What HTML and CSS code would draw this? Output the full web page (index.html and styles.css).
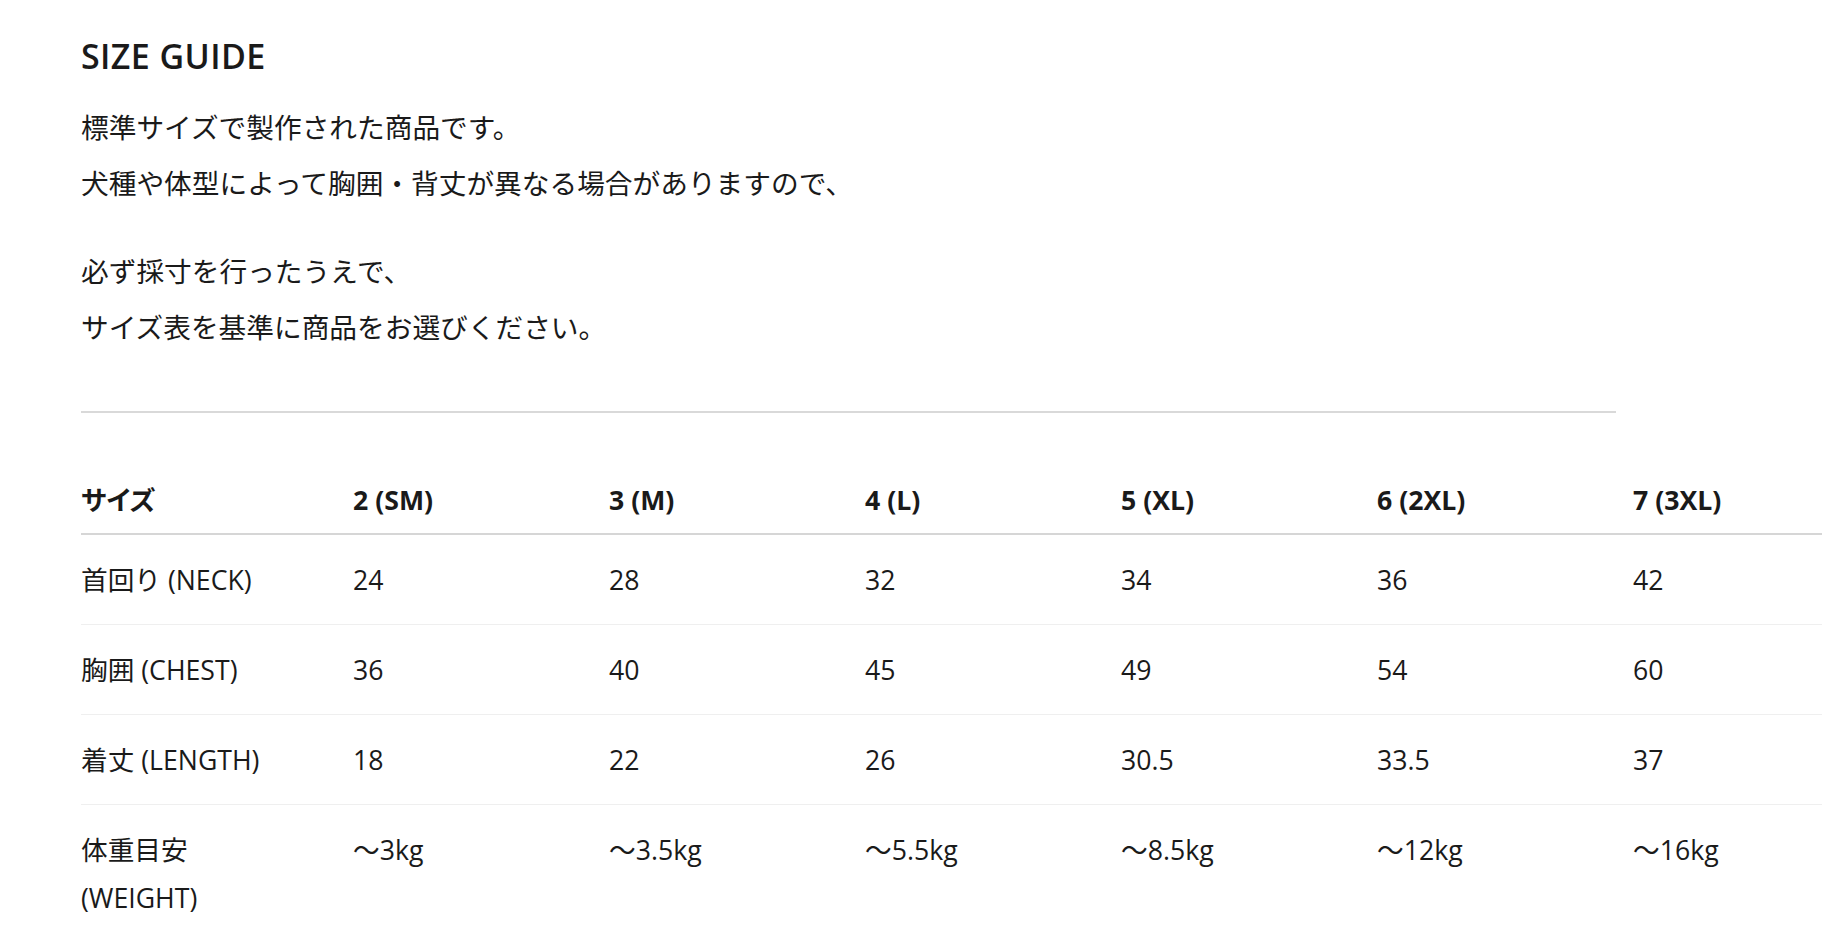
FILE: index.html
```html
<!DOCTYPE html>
<html lang="ja">
<head>
<meta charset="utf-8">
<title>SIZE GUIDE</title>
<link rel="stylesheet" href="styles.css">
</head>
<body>
<main class="page">
  <section class="guide">
    <h2 class="guide-title">SIZE GUIDE</h2>
    <p class="guide-text">標準サイズで製作された商品です。<br>犬種や体型によって胸囲・背丈が異なる場合がありますので、</p>
    <p class="guide-text">必ず採寸を行ったうえで、<br>サイズ表を基準に商品をお選びください。</p>
    <hr class="guide-rule">
    <table class="size-table">
      <colgroup>
        <col class="col-label">
        <col class="col-size"><col class="col-size"><col class="col-size">
        <col class="col-size"><col class="col-size"><col class="col-size">
      </colgroup>
      <thead>
        <tr>
          <th>サイズ</th>
          <th>2 (SM)</th>
          <th>3 (M)</th>
          <th>4 (L)</th>
          <th>5 (XL)</th>
          <th>6 (2XL)</th>
          <th>7 (3XL)</th>
        </tr>
      </thead>
      <tbody>
        <tr>
          <td>首回り (NECK)</td>
          <td>24</td><td>28</td><td>32</td><td>34</td><td>36</td><td>42</td>
        </tr>
        <tr>
          <td>胸囲 (CHEST)</td>
          <td>36</td><td>40</td><td>45</td><td>49</td><td>54</td><td>60</td>
        </tr>
        <tr>
          <td>着丈 (LENGTH)</td>
          <td>18</td><td>22</td><td>26</td><td>30.5</td><td>33.5</td><td>37</td>
        </tr>
        <tr>
          <td>体重目安<br>(WEIGHT)</td>
          <td>〜3kg</td><td>〜3.5kg</td><td>〜5.5kg</td><td>〜8.5kg</td><td>〜12kg</td><td>〜16kg</td>
        </tr>
      </tbody>
    </table>
  </section>
</main>
</body>
</html>
```
FILE: styles.css
```css
html, body {
  margin: 0;
  padding: 0;
  background: #ffffff;
  overflow: hidden;
}

body {
  font-family: "Open Sans", "Noto Sans CJK JP", sans-serif;
  color: #1a1a1a;
}

.page {
  padding: 34px 0 0 81px;
}

.guide {
  width: 1535px;
}

.guide-title {
  margin: 0;
  font-size: 34px;
  line-height: 44px;
  font-weight: 600;
  letter-spacing: 0.4px;
}

.guide-text {
  margin: 21px 0 0;
  font-size: 27.7px;
  line-height: 56px;
}

.guide-text + .guide-text {
  margin-top: 32px;
}

.guide-rule {
  margin: 56px 0 0;
  border: 0;
  height: 2px;
  background: #d9d9d9;
}

.size-table {
  margin-top: 63px;
  width: 1808px;
  table-layout: fixed;
  border-collapse: collapse;
  font-size: 26.67px;
}

.col-label {
  width: 272px;
}

.col-size {
  width: 256px;
}

.size-table th {
  text-align: left;
  font-weight: 700;
  line-height: 48px;
  padding: 0 0 9px;
  border-bottom: 2px solid #d6d6d6;
  font-feature-settings: "palt";
}

.size-table td {
  text-align: left;
  vertical-align: top;
  line-height: 48px;
  padding: 21px 0 20px;
  border-bottom: 1px solid #efefef;
}
```
